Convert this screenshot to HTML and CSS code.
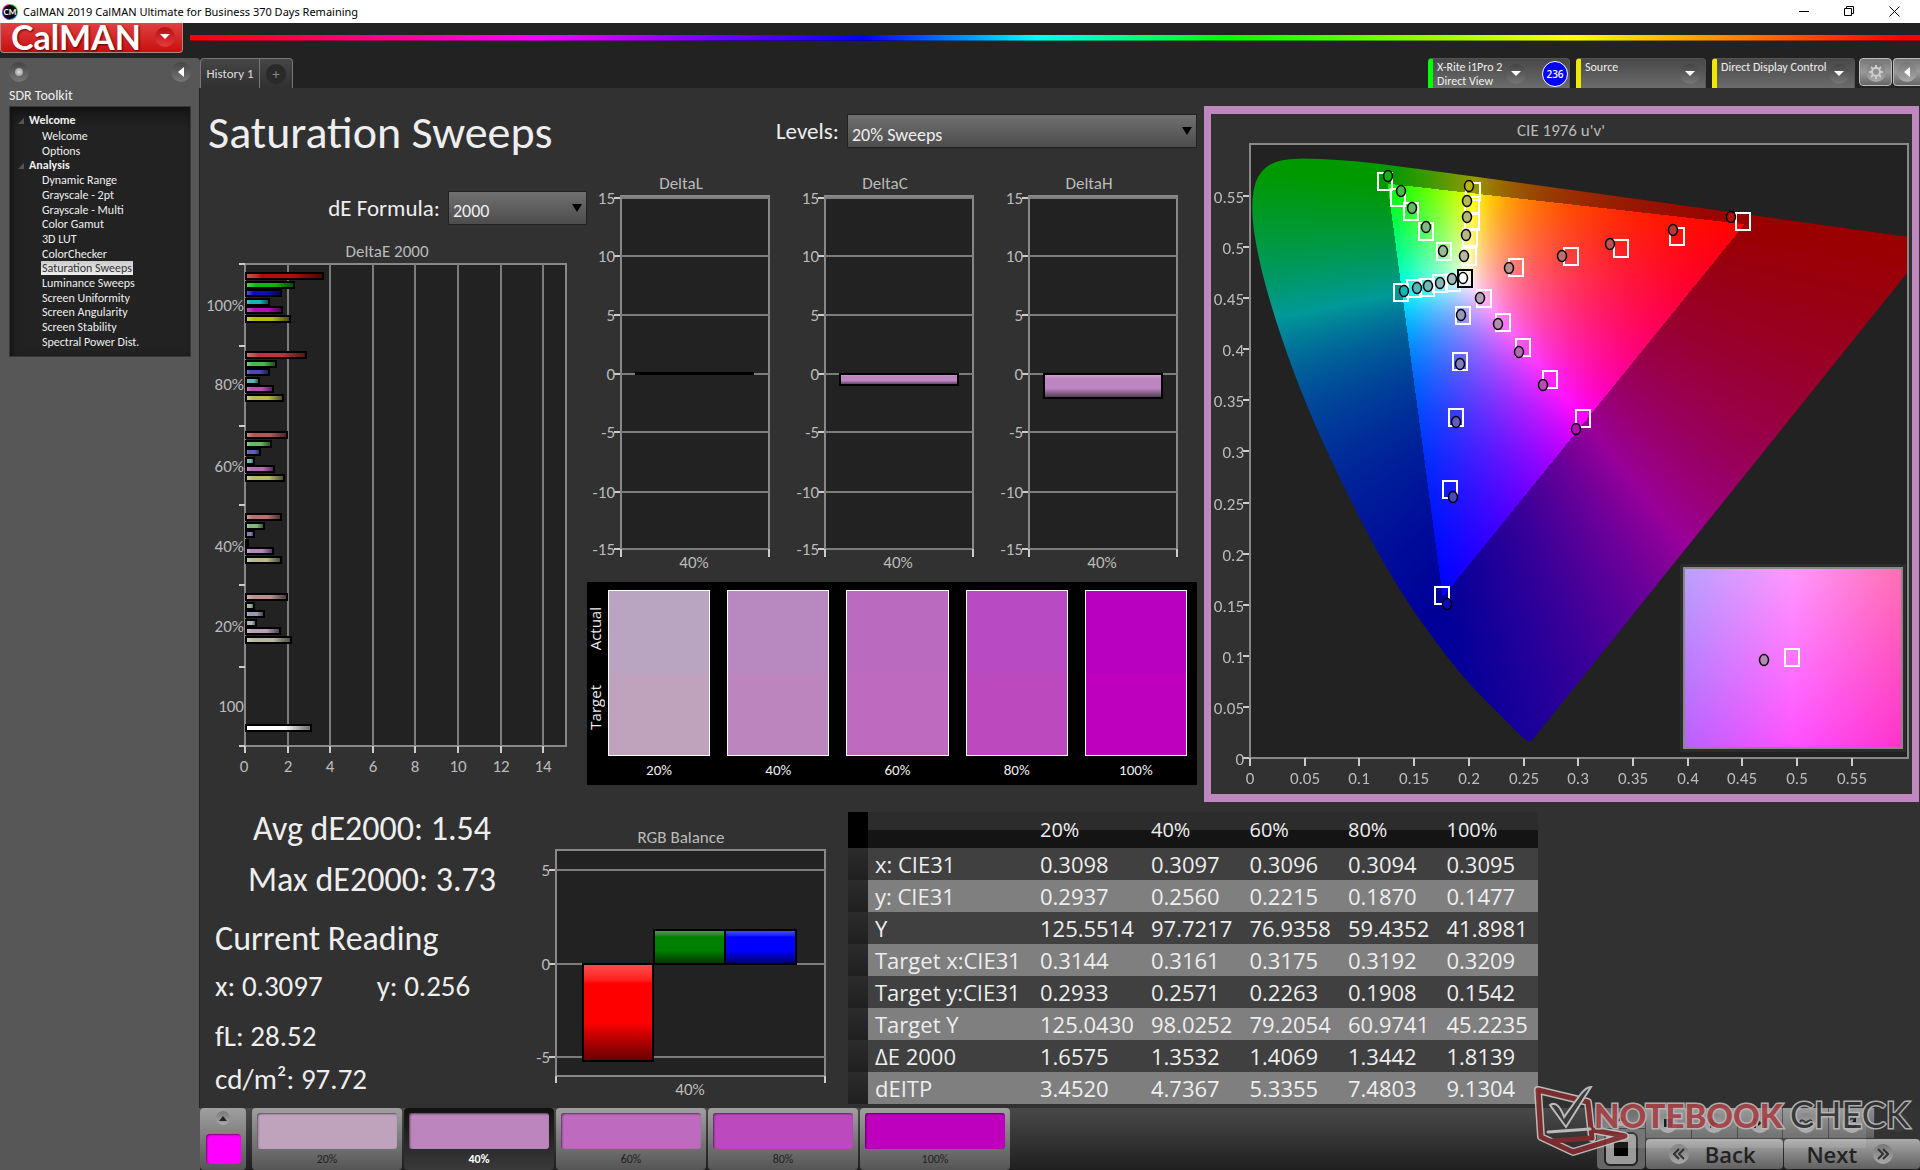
FILE: index.html
```html
<!DOCTYPE html>
<html lang="en">
<head>
<meta charset="utf-8">
<title>CalMAN 2019 CalMAN Ultimate for Business 370 Days Remaining</title>
<link rel="stylesheet" href="styles.css">
</head>
<body>
<header class="titlebar">
  <svg class="app-icon" width="16" height="16" viewBox="0 0 16 16" aria-hidden="true">
    <path d="M8 0a8 8 0 0 1 8 8H8z" fill="#4fd02b"/><path d="M16 8a8 8 0 0 1-8 8V8z" fill="#35c8e8"/>
    <path d="M8 16a8 8 0 0 1-8-8h8z" fill="#3838e0"/><path d="M0 8a8 8 0 0 1 8-8v8z" fill="#d828a0"/>
    <circle cx="8" cy="8" r="7" fill="#0c0c10"/>
    <text x="8" y="11" text-anchor="middle" class="app-icon-text">CM</text>
  </svg>
  <span class="window-title">CalMAN 2019 CalMAN Ultimate for Business 370 Days Remaining</span>
  <div class="window-buttons">
    <button aria-label="Minimize"><svg width="11" height="11" viewBox="0 0 11 11"><path d="M0 5.500h10" /></svg></button>
    <button aria-label="Restore"><svg width="11" height="11" viewBox="0 0 11 11"><path d="M.5 2.500h7v7h-7zM2.500 2.500v-2h7v7h-2"/></svg></button>
    <button aria-label="Close"><svg width="11" height="11" viewBox="0 0 11 11"><path d="M.5.500l10 10M10.500.500l-10 10"/></svg></button>
  </div>
</header>

<div class="brandbar">
  <button class="brand">CalMAN<span class="round red"><i class="caret"></i></span></button>
  <div class="rainbow"></div>
</div>

<div class="app">
  <nav class="sidebar">
    <div class="sidebar-top">
      <button class="round" aria-label="Options"><i class="dot"></i></button>
      <button class="round" aria-label="Collapse"><i class="caret left"></i></button>
    </div>
    <h2>SDR Toolkit</h2>
    <div class="tree">
      <strong>Welcome</strong>
      <ul class="two"><li><a href="#">Welcome</a></li><li><a href="#">Options</a></li></ul>
      <strong>Analysis</strong>
      <ul class="twelve">
        <li><a href="#">Dynamic Range</a></li><li><a href="#">Grayscale - 2pt</a></li>
        <li><a href="#">Grayscale - Multi</a></li><li><a href="#">Color Gamut</a></li>
        <li><a href="#">3D LUT</a></li><li><a href="#">ColorChecker</a></li>
        <li><a href="#" class="current">Saturation Sweeps</a></li><li><a href="#">Luminance Sweeps</a></li>
        <li><a href="#">Screen Uniformity</a></li><li><a href="#">Screen Angularity</a></li>
        <li><a href="#">Screen Stability</a></li><li><a href="#">Spectral Power Dist.</a></li>
      </ul>
    </div>
  </nav>

  <div class="workspace">
    <div class="toolbar">
      <div class="tabs"><button>History 1</button><button class="add" aria-label="Add tab"><span class="round">+</span></button></div>
      <div class="devices">
        <div class="device meter"><button>X-Rite i1Pro 2<br>Direct View</button><span class="round"><i class="caret"></i></span><span class="badge">236</span></div>
        <div class="device source"><button>Source</button><span class="round"><i class="caret"></i></span></div>
        <div class="device display"><button>Direct Display Control</button><span class="round"><i class="caret"></i></span></div>
        <button class="square" aria-label="Settings"><span class="round light"><svg width="14" height="14" viewBox="0 0 14 14"><circle cx="7" cy="7" r="4" fill="none" stroke="#ccc" stroke-width="2"/><path d="M7 0v3M7 11v3M0 7h3M11 7h3M2 2l2 2M10 10l2 2M12 2l-2 2M4 10l-2 2" stroke="#ccc" stroke-width="2"/></svg></span></button>
        <button class="square last" aria-label="Collapse devices"><span class="round light"><i class="caret left"></i></span></button>
      </div>
    </div>

    <main>
      <div class="top">
        <section class="overview">
          <h1>Saturation Sweeps</h1>
          <div class="field formula"><label for="formula">dE Formula:</label><span class="select"><select id="formula"><option>2000</option></select></span></div>
          <svg id="deltaE" class="chart" viewBox="0 0 387 550"></svg>
        </section>
        <section class="detail">
          <div class="field levels"><label for="levels">Levels:</label><span class="select"><select id="levels"><option>20% Sweeps</option></select></span></div>
          <div class="deltas">
            <svg id="deltaL" class="chart" viewBox="0 0 204 408"></svg>
            <svg id="deltaC" class="chart" viewBox="0 0 204 408"></svg>
            <svg id="deltaH" class="chart" viewBox="0 0 204 408"></svg>
          </div>
          <div class="compare">
            <div class="sides"><span>Actual</span><span>Target</span></div>
            <figure><div class="patch s20"></div><figcaption>20%</figcaption></figure>
            <figure><div class="patch s40"></div><figcaption>40%</figcaption></figure>
            <figure><div class="patch s60"></div><figcaption>60%</figcaption></figure>
            <figure><div class="patch s80"></div><figcaption>80%</figcaption></figure>
            <figure><div class="patch s100"></div><figcaption>100%</figcaption></figure>
          </div>
        </section>
        <section class="cie"><svg id="cie" class="chart" viewBox="0 0 701 680"></svg></section>
      </div>

      <div class="bottom">
        <section class="readings">
          <p class="big">Avg dE2000: 1.54</p>
          <p class="big max">Max dE2000: 3.73</p>
          <h3>Current Reading</h3>
          <p class="pair"><span>x: 0.3097</span><span>y: 0.256</span></p>
          <p class="lum">fL: 28.52</p>
          <p class="nits">cd/m²: 97.72</p>
        </section>
        <svg id="rgb" class="chart rgb" viewBox="0 0 308 301"></svg>
        <table>
          <colgroup><col class="c-stub"><col class="c-name"><col class="c-wide"><col><col><col><col></colgroup>
          <thead><tr><th></th><th></th><th>20%</th><th>40%</th><th>60%</th><th>80%</th><th>100%</th></tr></thead>
          <tbody>
            <tr><td></td><th>x: CIE31</th><td>0.3098</td><td>0.3097</td><td>0.3096</td><td>0.3094</td><td>0.3095</td></tr>
            <tr><td></td><th>y: CIE31</th><td>0.2937</td><td>0.2560</td><td>0.2215</td><td>0.1870</td><td>0.1477</td></tr>
            <tr><td></td><th>Y</th><td>125.5514</td><td>97.7217</td><td>76.9358</td><td>59.4352</td><td>41.8981</td></tr>
            <tr><td></td><th>Target x:CIE31</th><td>0.3144</td><td>0.3161</td><td>0.3175</td><td>0.3192</td><td>0.3209</td></tr>
            <tr><td></td><th>Target y:CIE31</th><td>0.2933</td><td>0.2571</td><td>0.2263</td><td>0.1908</td><td>0.1542</td></tr>
            <tr><td></td><th>Target Y</th><td>125.0430</td><td>98.0252</td><td>79.2054</td><td>60.9741</td><td>45.2235</td></tr>
            <tr><td></td><th>ΔE 2000</th><td>1.6575</td><td>1.3532</td><td>1.4069</td><td>1.3442</td><td>1.8139</td></tr>
            <tr><td></td><th>dEITP</th><td>3.4520</td><td>4.7367</td><td>5.3355</td><td>7.4803</td><td>9.1304</td></tr>
          </tbody>
        </table>
      </div>
    </main>

    <footer>
      <button class="pattern" aria-label="Pattern"><span class="round small"><i class="caret up"></i></span><span class="fill"></span></button>
      <div class="steps">
        <button><span class="step s20"></span>20%</button>
        <button class="active"><span class="step s40"></span>40%</button>
        <button><span class="step s60"></span>60%</button>
        <button><span class="step s80"></span>80%</button>
        <button><span class="step s100"></span>100%</button>
      </div>
      <div class="transport">
        <div class="stop"><button aria-label="More"><span class="round small"><i class="caret up"></i></span></button><button class="halt" aria-label="Stop"><i></i></button></div>
        <div class="controls">
          <div class="media">
            <button aria-label="Stop reading"><span class="round light"><svg width="10" height="10" viewBox="0 0 10 10"><path d="M1 1h8v8H1z"/></svg></span></button>
            <button aria-label="Read"><span class="round light"><svg width="10" height="10" viewBox="0 0 10 10"><path d="M1 0l8 5-8 5z"/></svg></span></button>
            <button aria-label="Read series"><span class="round light"><svg width="12" height="10" viewBox="0 0 12 10"><path d="M0 0h2v10H0zM10 0h2v10h-2zM4 2l4 3-4 3z"/></svg></span></button>
            <button aria-label="Read continuously"><span class="round light"><svg width="14" height="8" viewBox="0 0 14 8"><path d="M7 4C5 1 1 0 1 4s4 3 6 0 6-4 6 0-4 3-6 0z" fill="none" stroke="#222" stroke-width="2"/></svg></span></button>
            <button aria-label="Refresh"><span class="round light"><svg width="12" height="12" viewBox="0 0 12 12"><path d="M2 5a4 4 0 0 1 7-2M10 7a4 4 0 0 1-7 2" fill="none" stroke="#222" stroke-width="2"/><path d="M10 0v5H6zM2 12V7h4z"/></svg></span></button>
            <button class="off" aria-label="Unavailable" disabled><span class="round"></span></button>
          </div>
          <div class="paging">
            <button><span class="round light"><svg width="12" height="12" viewBox="0 0 12 12"><path d="M6 1L1 6l5 5M11 1L6 6l5 5" fill="none" stroke="#333" stroke-width="2"/></svg></span>Back</button>
            <button>Next<span class="round light"><svg width="12" height="12" viewBox="0 0 12 12"><path d="M1 1l5 5-5 5M6 1l5 5-5 5" fill="none" stroke="#333" stroke-width="2"/></svg></span></button>
          </div>
        </div>
      </div>
      <svg class="watermark" width="386" height="76" viewBox="0 0 386 76">
        <path d="M63 23h270v40H63z" fill="#fff" opacity=".12"/>
        <g fill="none" stroke-linejoin="round" stroke-linecap="round">
          <g stroke="#c8c8c8" stroke-width="8"><path d="M5 5l50 12 4 36M5 5l3 47 32 15 52-16-32-6"/></g>
          <path d="M5 5l50 12 4 36-40 3M5 5l3 47 32 15 52-16-32-6" stroke="#842c2f" stroke-width="5"/>
          <path d="M15 47l42-3" stroke="#c8c8c8" stroke-width="3"/>
        </g>
        <path d="M17 20q8-5 14 12l16-22q6-8 11-8L33 42z" fill="#3a3a3a" stroke="#c8c8c8" stroke-width="2"/>
        <text x="61" y="43" class="wm-bold">NOTEBOOK</text>
        <text x="257" y="43" class="wm-thin">CHECK</text>
      </svg>
    </footer>
  </div>
</div>
<script src="charts.js"></script>
</body>
</html>
```
FILE: styles.css
```css
* { box-sizing: border-box; }
body { margin: 0; min-height: 100vh; display: flex; flex-direction: column; background: #222; color: #eee; font-family: Carlito, Calibri, Lato, sans-serif; font-size: 13px; }
h1, h2, h3, p, ul, figure { margin: 0; padding: 0; font-weight: 400; }
ul { list-style: none; }
button, select { font: inherit; color: inherit; border: 0; margin: 0; padding: 0; background: none; }
a { color: inherit; text-decoration: none; }
svg { display: block; }

/* window frame */
.titlebar { height: 23px; background: #fff; color: #000; display: flex; align-items: center; padding-left: 2px; gap: 5px; font: 11px "Noto Sans", sans-serif; }
.app-icon-text { font: bold 8px Lato, sans-serif; fill: #fff; }
.window-title { flex: 1; }
.window-buttons { display: flex; padding-right: 3px; }
.window-buttons button { width: 45px; height: 22px; display: grid; place-items: center; }
.window-buttons path { fill: none; stroke: #000; }
.brandbar { height: 35px; display: flex; background: #222; gap: 7px; }
.brand { width: 183px; height: 30px; display: flex; align-items: center; justify-content: space-between; padding: 0 7px 2px 10px; background: linear-gradient(#e04141, #c80f10); border: 1px solid #a88; border-top: 0; border-radius: 0 0 4px 4px; font: bold 34px/28px Lato, sans-serif; color: #fff; text-shadow: 1px 1px 2px #500; }
.rainbow { flex: 1; height: 6px; margin-top: 12px; border-bottom: 1px solid #0006; background: linear-gradient(90deg, #f00, #f0f 20%, #00f 39%, #0ff 49%, #0f0 60%, #ff0 80%, #f00 99%); }

/* shared glyphs */
.round { width: 20px; height: 20px; border-radius: 50%; display: inline-grid; place-items: center; flex: none; background: linear-gradient(#444, #777); }
.round.red { background: linear-gradient(#b01215, #e8383a); }
.round.light { background: linear-gradient(#777, #aaa); }
.round.small { width: 14px; height: 14px; background: linear-gradient(#777, #aaa); }
.caret { border: 5px solid transparent; border-top-color: #fff; border-bottom: 0; }
.caret.left { border: 5px solid transparent; border-right: 6px solid #fff; border-left: 0; }
.caret.up { border: 4px solid transparent; border-bottom: 5px solid #222; border-top: 0; }
.dot { width: 8px; height: 8px; border-radius: 50%; background: radial-gradient(#ddd, #888); }

.app { flex: 1; display: flex; }

/* sidebar */
.sidebar { width: 200px; flex: none; background: #575757; border-radius: 0 4px 0 0; padding: 4px 9px; }
.sidebar-top { display: flex; justify-content: space-between; }
.sidebar h2 { font-size: 14px; line-height: 20px; margin: 4px 0 0; }
.tree { height: 251px; padding: 6px 0 0 19px; background: linear-gradient(#171717, #222 20px); border: 1px solid #383838; font-size: 12px; box-shadow: inset 2px 2px 6px #111; }
.tree strong { display: block; line-height: 15px; position: relative; }
.tree strong::before { content: ""; position: absolute; left: -11px; top: 5px; border: 3px solid; border-color: transparent #555 #555 transparent; }
.tree ul { display: grid; grid-auto-rows: 1fr; padding-left: 12px; align-items: center; }
.tree .two { height: 30px; }
.tree .twelve { height: 176px; }
.tree li { line-height: 14px; }
.tree a { padding: 0 1px; }
.tree .current { display: inline-block; background: linear-gradient(#ccc, #eee); color: #333; }

/* toolbar */
.workspace { flex: 1; min-width: 0; display: flex; flex-direction: column; }
.toolbar { height: 30px; display: flex; justify-content: space-between; }
.tabs { display: flex; border: 1px solid #777; border-bottom: 0; border-radius: 4px 4px 0 0; background: linear-gradient(#464646, #303030); color: #ddd; }
.tabs button { width: 58px; }
.tabs .add { width: 33px; border-left: 1px solid #777; }
.tabs .round { background: #2a2a2a; color: #888; font-size: 15px; }
.devices { display: flex; }
.device { display: flex; align-items: center; border-radius: 4px 4px 0 0; background: linear-gradient(#484848, #6c6c6c); border: 1px solid #555; border-left: 5px solid #0f0; border-bottom: 0; margin-right: 6px; padding: 0 5px 0 4px; font-size: 12px; line-height: 14px; }
.device button { flex: 1; align-self: stretch; text-align: left; }
.device.meter { width: 142px; padding-right: 1px; }
.device.source { width: 130px; border-left-color: #f0e800; }
.device.display { width: 143px; margin-right: 4px; border-left-color: #f0e800; white-space: nowrap; }
.source button, .display button { padding-bottom: 14px; }
.badge { width: 26px; height: 26px; border-radius: 50%; margin-left: 16px; background: #00f; border: 1px solid #fff; color: #fff; display: grid; place-items: center; font: 600 10px "Open Sans", sans-serif; }
.square { width: 33px; height: 28px; border: 1px solid #bbb; border-radius: 4px; background: linear-gradient(#777, #999 50%, #666); display: grid; place-items: center; margin-right: 1px; }
.square.last { width: 27px; margin: 0; border-right: 0; border-radius: 4px 0 0 4px; }

/* page */
main { flex: 1; background: #313131; border-left: 1px solid #222; margin-left: -1px; padding-right: 1px; }
.top { display: grid; grid-template-columns: 387fr 617fr 715fr; }
h1 { font-size: 46px; line-height: 60px; padding: 14px 0 2px 8px; }
.field { display: flex; align-items: center; gap: 8px; }
.field label { font-size: 23px; }
.select { position: relative; display: block; }
.select::after { content: ""; position: absolute; right: 5px; top: 13px; border: 5px solid transparent; border-top: 8px solid #000; border-bottom: 0; pointer-events: none; }
select { appearance: none; width: 100%; height: 34px; padding: 6px 4px 0; font-size: 18px; background: linear-gradient(#707070, #4c4c4c); border: 1px solid #222; border-radius: 0; }
.formula { margin-top: 27px; justify-content: flex-end; }
.formula .select { width: 139px; }
.levels select { padding-top: 8px; }
.chart { width: 100%; height: auto; overflow: visible; }
#deltaE { margin-top: 15px; }
.levels { margin: 26px 7px 24px 0; justify-content: flex-end; }
.levels .select { width: 350px; }
.deltas { display: grid; grid-template-columns: repeat(3, 1fr); padding-right: 5px; }
.compare { height: 203px; margin: 2px 7px 0 0; padding: 8px 10px 0 0; background: #000; display: grid; grid-template-columns: 21px 102fr 119fr 119fr 119fr 119fr; }
.compare figure { margin-left: 17px; text-align: center; }
.compare .sides + figure { margin-left: 0; }
.patch { height: 166px; border: 1px solid #fff; }
figcaption { line-height: 28px; font-size: 15px; }
.sides { height: 166px; display: grid; grid-template-rows: 1fr 1fr; place-items: center; font: 15px/16px "Open Sans", sans-serif; padding: 0 5px 10px 0; }
.sides span { writing-mode: vertical-rl; transform: rotate(180deg); }
.patch.s20 { background: linear-gradient(#b9a5c1 50%, #bfa3bd 50%); }
.patch.s40 { background: linear-gradient(#b888c0 50%, #bd85be 50%); }
.patch.s60 { background: linear-gradient(#ba6bc0 50%, #be6abe 50%); }
.patch.s80 { background: linear-gradient(#b84bc4 50%, #bc49bd 50%); }
.patch.s100 { background: linear-gradient(#b700c0 50%, #be00be 50%); }
.cie { margin-top: 18px; border: 8px solid #bf86bf; border-width: 8px 7px; align-self: start; }

.bottom { display: grid; grid-template-columns: 340fr 308fr 690fr 381fr; margin-top: 4px; }
.readings { padding-left: 15px; font-size: 29px; line-height: 36px; white-space: nowrap; }
.readings .big { font-size: 34px; line-height: 45px; text-align: center; padding-right: 11px; }
.readings .max { margin-top: 6px; }
.readings h3 { font-size: 34px; line-height: 40px; margin-top: 17px; }
.pair { display: flex; gap: 54px; margin-top: 9px; }
.lum { margin-top: 14px; }
.nits { margin-top: 7px; }
table { border-collapse: collapse; table-layout: fixed; width: 100%; margin-top: 6px; align-self: start; font: 22px/32px "Open Sans", sans-serif; white-space: nowrap; }
.c-stub { width: 20px; }
.c-name { width: 165px; }
.c-wide { width: 111px; }
th, td { padding: 0 0 0 7px; font-weight: 400; text-align: left; height: 32px; }
thead th { height: 36px; font-size: 20px; background: linear-gradient(#2c2c2c 50%, #141414 50%); }
thead th:first-child { background: #000; }
tbody tr { background: #404040; }
tbody tr:nth-child(even) { background: #7f7f7f; }
tbody td:first-child { background: linear-gradient(#2c2c2c, #202020); }

/* footer */
footer { position: relative; height: 62px; display: flex; background: linear-gradient(#494949, #1f1f1f); font-size: 12px; }
footer button { background: linear-gradient(#a0a0a0, #555); color: #222; }
.pattern { width: 46px; border-radius: 4px; display: flex; flex-direction: column; align-items: center; gap: 9px; padding-top: 3px; }
.fill { width: 35px; height: 30px; border-radius: 4px; background: #f0f; box-shadow: inset 1px 1px 2px #0008; }
.steps { display: flex; gap: 2px; margin-left: 6px; }
.steps button { width: 150px; border-radius: 4px; padding: 5px 5px 0; display: flex; flex-direction: column; line-height: 20px; align-items: center; }
.steps .active { background: linear-gradient(#111, #3a3a3a); color: #fff; font-weight: 700; }
.step { width: 140px; height: 36px; border-radius: 3px; box-shadow: inset 1px 1px 2px #0008; flex: none; }
.step.s20 { background: #bfa3bd; }
.step.s40 { background: #bd85be; }
.step.s60 { background: #be6abe; }
.step.s80 { background: #bc49bd; }
.step.s100 { background: #be00be; }
.transport { margin-left: auto; display: flex; gap: 1px; padding-bottom: 1px; }
.stop { width: 48px; display: grid; grid-template-rows: 20px 1fr; }
.stop button { background: linear-gradient(#5a5a5a, #777); }
.stop .halt { background: #666; display: grid; place-items: center; border-radius: 0 0 4px 4px; border-top: 1px solid #333; }
.halt i { width: 30px; height: 30px; border: 8px solid #999; outline: 2px solid #222; border-radius: 4px; background: #000; }
.controls { width: 274px; display: grid; grid-template-rows: 30px 1fr; gap: 1px; }
.media { display: grid; grid-template-columns: repeat(6, 1fr); gap: 1px; }
.media button { background: linear-gradient(#909090, #606060); }
.media .off { background: #333; }
.media .off .round { background: #3c3c3c; }
.paging { display: grid; grid-template-columns: 1fr 1fr; gap: 1px; }
.paging button { display: flex; align-items: center; justify-content: center; gap: 16px; padding-right: 4px; border-radius: 4px; font: 600 22px/28px "Open Sans", sans-serif; background: linear-gradient(#aaa, #606060); }
.watermark { position: absolute; right: 1px; top: -23px; opacity: .9; pointer-events: none; }
.wm-bold, .wm-thin { font: 900 33px Lato, sans-serif; fill: #a84347; stroke: #bbb; stroke-width: 3px; paint-order: stroke; }
.wm-thin { font-weight: 400; font-size: 36px; fill: #333; }

/* charts */
.chart text { font-size: 17px; fill: #bbb; }
.chart .frame { fill: #222; stroke: #888; stroke-width: 2; shape-rendering: crispEdges; }
.chart .edge { fill: none; stroke: #888; stroke-width: 2; shape-rendering: crispEdges; }
.chart .grid { stroke: #7c7c7c; stroke-width: 2; shape-rendering: crispEdges; }
.chart .tick { stroke: #ccc; stroke-width: 2; shape-rendering: crispEdges; }
```
FILE: charts.js
```js
const NS = "http://www.w3.org/2000/svg";

function add(parent, tag, attrs, text) {
  const el = document.createElementNS(NS, tag);
  for (const k in attrs) el.setAttribute(k, attrs[k]);
  if (text !== undefined) el.textContent = text;
  parent.append(el);
  return el;
}
const line = (p, x1, y1, x2, y2, c) => add(p, "line", { x1, y1, x2, y2, class: c });
const label = (p, x, y, t, anchor = "middle") => add(p, "text", { x, y: y + 5, "text-anchor": anchor }, t);

let gradients = 0;
function shade(svg, color, vertical) {
  const id = "g" + gradients++;
  const g = add(svg, "linearGradient", vertical ? { id, x1: 0, y1: 0, x2: 0, y2: 1 } : { id });
  const stop = (offset, c) => add(g, "stop", { offset, "stop-color": c });
  stop(0, `color-mix(in srgb, ${color} 70%, white)`);
  stop(.2, color);
  stop(.6, color);
  stop(1, `color-mix(in srgb, ${color} 40%, black)`);
  return `url(#${id})`;
}
function bar(svg, x, y, width, height, color, vertical) {
  add(svg, "rect", { x, y, width, height, fill: shade(svg, color, vertical), stroke: "#000", "stroke-width": 2 });
}

/* DeltaE 2000: horizontal bars, grouped by saturation level */
const COLORS = {
  100: ["#b80c0c", "#0cb80c", "#0c0cb8", "#0cb8b8", "#b80cb8", "#b8b80c"],
  80: ["#b83838", "#48b848", "#4848b8", "#58b8b8", "#b84cb8", "#b8b84c"],
  60: ["#b85454", "#64b864", "#6060b8", "#70b8b8", "#b868b8", "#b8b86c"],
  40: ["#b87070", "#80b880", "#8080b8", "#88b8b8", "#b888b8", "#b8b888"],
  20: ["#b89090", "#98b898", "#9898b8", "#a0b8b8", "#b8a0b8", "#b8b8a0"]
};
(function () {
  const svg = document.getElementById("deltaE"), x0 = 45, top = 24, bottom = 506;
  label(svg, 187, 12, "DeltaE 2000");
  add(svg, "rect", { x: x0, y: top, width: 321, height: bottom - top, class: "frame" });
  [0, 2, 4, 6, 8, 10, 12, 14].forEach((v, i) => {
    const x = Math.round(x0 + v * 21.3);
    if (i) line(svg, x, top, x, bottom, "grid");
    line(svg, x, bottom, x, bottom + 7, "tick");
    label(svg, x - (v ? 0 : 1), 527, v);
  });
  [24, 106, 186, 265, 345, 427, 506].forEach(y => line(svg, x0 - 6, y, x0, y, "tick"));
  const groups = [
    [100, 36, 66, [79, 50, 37, 25, 38, 46]],
    [80, 115, 145, [62, 32, 25, 15, 29, 39]],
    [60, 195, 227, [43, 27, 16, 10, 30, 40]],
    [40, 277, 307, [37, 20, 10, 4, 29, 37]],
    [20, 357, 387, [43, 10, 20, 12, 36, 47]]
  ];
  for (const [level, y, ly, widths] of groups) {
    widths.forEach((w, i) => bar(svg, x0 + 1, Math.round(y + i * 8.5) - 3, w - 2, 6, COLORS[level][i]));
    label(svg, x0 - 1, ly, level + "%", "end");
  }
  bar(svg, x0 + 1, 485, 65, 6, "#ffffff");
  label(svg, x0 - 1, 467, "100", "end");
})();

/* DeltaL / DeltaC / DeltaH */
function delta(id, name, y, h) {
  const svg = document.getElementById(id);
  label(svg, 94, 12, name);
  add(svg, "rect", { x: 34, y: 24, width: 148, height: 353, class: "frame" });
  const rows = [26, 84, 143, 202, 260, 320, 377];
  rows.forEach((gy, i) => {
    line(svg, 34, gy, 182, gy, "grid");
    line(svg, 27, gy, 33, gy, "tick");
    label(svg, 28, gy + 1, 15 - i * 5, "end");
  });
  line(svg, 34, 377, 34, 385, "tick");
  line(svg, 182, 377, 182, 385, "tick");
  if (h) bar(svg, 49, y, 118, h, "#bd86c0", true);
  else add(svg, "rect", { x: 48, y, width: 119, height: 3 });
  label(svg, 107, 391, "40%");
}
delta("deltaL", "DeltaL", 200, 0);
delta("deltaC", "DeltaC", 202, 11);
delta("deltaH", "DeltaH", 202, 24);

/* RGB balance */
(function () {
  const svg = document.getElementById("rgb");
  label(svg, 141, 32, "RGB Balance");
  add(svg, "rect", { x: 16, y: 44, width: 269, height: 226, class: "frame" });
  [[64, 5], [158, 0], [251, -5]].forEach(([y, v]) => {
    line(svg, 16, y, 285, y, "grid");
    line(svg, 9, y, 15, y, "tick");
    label(svg, 10, y + 1, v, "end");
  });
  line(svg, 16, 270, 16, 277, "tick");
  line(svg, 285, 270, 285, 277, "tick");
  bar(svg, 43, 158, 70, 97, "#ff0000", true);
  bar(svg, 114, 124, 71, 34, "#008000", true);
  bar(svg, 185, 124, 71, 34, "#0000ff", true);
  label(svg, 150, 284, "40%");
})();

/* CIE 1976 u'v' diagram */
const PLOT = { x: 39, y: 30, w: 658, h: 614, su: 1096, sv: 1022 };
const LOCUS = [[.1741, .005], [.1733, .0048], [.1714, .0051], [.1689, .0069], [.1644, .0109], [.1566, .0177], [.144, .0297],
  [.1241, .0578], [.1096, .0868], [.0913, .1327], [.0687, .2007], [.0454, .295], [.0235, .4127], [.0082, .5384],
  [.0039, .6548], [.0139, .7502], [.0389, .812], [.0743, .8338], [.1142, .8262], [.1547, .8059], [.2296, .7543],
  [.3016, .6923], [.3731, .6245], [.4441, .5547], [.5125, .4866], [.5752, .4242], [.627, .3725], [.6658, .334],
  [.6915, .3083], [.719, .2809], [.7347, .2653]];

/* linear RGB, scaled so that the strongest channel is full; dimmed outside the gamut */
function colorAt(u, v) {
  const X = 9 * u / (4 * v), Z = (12 - 3 * u - 20 * v) / (4 * v);
  const rgb = [3.2406 * X - 1.5372 - .4986 * Z, -.9689 * X + 1.8758 + .0415 * Z, .0557 * X - .204 + 1.057 * Z];
  const max = Math.max(...rgb), inside = Math.min(...rgb) >= 0;
  return rgb.map(c => 255 * Math.max(0, c / max) * (inside ? 1 : .6));
}
function paint(canvas, colorOf) {
  const ctx = canvas.getContext("2d"), w = canvas.width, h = canvas.height, img = ctx.createImageData(w, h);
  for (let y = 0; y < h; y++) for (let x = 0; x < w; x++) {
    const [r, g, b] = colorOf(x, y), i = (y * w + x) * 4;
    img.data[i] = r; img.data[i + 1] = g; img.data[i + 2] = b; img.data[i + 3] = 255;
  }
  ctx.putImageData(img, 0, 0);
  return ctx;
}
function canvasIn(svg, x, y, width, height) {
  const fo = add(svg, "foreignObject", { x, y, width, height });
  const c = document.createElement("canvas");
  c.width = width; c.height = height; c.style.display = "block";
  fo.append(c);
  return c;
}
(function () {
  const svg = document.getElementById("cie");
  label(svg, 350, 17, "CIE 1976 u'v'");
  add(svg, "rect", { x: PLOT.x, y: PLOT.y, width: PLOT.w, height: PLOT.h, class: "frame" });
  const canvas = canvasIn(svg, PLOT.x, PLOT.y, PLOT.w, PLOT.h);
  const ctx = paint(canvas, (x, y) => colorAt(x / PLOT.su, Math.max(.001, (PLOT.h - y) / PLOT.sv)));
  ctx.globalCompositeOperation = "destination-in";
  const pts = LOCUS.map(([x, y]) => {
    const d = -2 * x + 12 * y + 3;
    return [4 * x / d * PLOT.su, PLOT.h - 9 * y / d * PLOT.sv];
  });
  ctx.beginPath();
  ctx.moveTo(...pts[0]);
  for (let i = 1; i < pts.length - 1; i++) {
    ctx.quadraticCurveTo(...pts[i], (pts[i][0] + pts[i + 1][0]) / 2, (pts[i][1] + pts[i + 1][1]) / 2);
  }
  ctx.lineTo(...pts[pts.length - 1]);
  ctx.fill();
  add(svg, "rect", { x: PLOT.x, y: PLOT.y, width: PLOT.w, height: PLOT.h, class: "edge" });

  for (let i = 0; i <= 11; i++) {
    const v = String(+(i * .05).toFixed(2));
    const x = Math.round(PLOT.x + i * 54.7), y = Math.round(PLOT.y + PLOT.h - i * 51.1);
    line(svg, x, 644, x, 652, "tick");
    label(svg, x, 665, v);
    line(svg, PLOT.x - 7, y, PLOT.x - 1, y, "tick");
    label(svg, PLOT.x - 6, y + 2, v, "end");
  }

  /* target squares and measured dots, per hue, from 100% down to 20% */
  const series = [
    [1, [[135, 37], [148, 53], [161, 67], [176, 87], [194, 107]], [[138, 32], [151, 47], [162, 64], [176, 83], [193, 107]]],
    [5, [[223, 47], [222, 61], [222, 77], [220, 93], [219, 112]], [[219, 42], [217, 57], [217, 73], [216, 91], [214, 112]]],
    [3, [[151, 148], [164, 144], [177, 143], [190, 139], [203, 138]], [[154, 147], [167, 144], [178, 142], [190, 139], [202, 135]]],
    [0, [[493, 77], [427, 92], [371, 104], [321, 112], [266, 123]], [[481, 73], [423, 86], [360, 100], [312, 112], [259, 124]]],
    [4, [[333, 274], [300, 235], [273, 203], [253, 178], [234, 154]], [[326, 285], [293, 241], [269, 208], [248, 180], [230, 154]]],
    [2, [[192, 451], [200, 345], [206, 273], [210, 217], [213, 171]], [[197, 460], [203, 353], [206, 278], [210, 220], [211, 171]]]
  ];
  const square = (x, y, stroke) => add(svg, "rect", { x: x - 7, y: y - 8, width: 14, height: 17, fill: "none", stroke, "stroke-width": 2 });
  const dot = (x, y, fill) => add(svg, "ellipse", { cx: x, cy: y, rx: 4.5, ry: 5.5, fill, stroke: "#000", "stroke-width": 1.5 });
  const levels = [100, 80, 60, 40, 20];
  for (const [, targets] of series) for (const [x, y] of targets) square(x + PLOT.x, y + PLOT.y, "#fff");
  square(215 + PLOT.x, 134 + PLOT.y, "#000");
  for (const [hue, , dots] of series) dots.forEach(([x, y], i) => dot(x + PLOT.x, y + PLOT.y, COLORS[levels[i]][hue]));
  dot(213 + PLOT.x, 134 + PLOT.y, "#fff");

  /* magnified view around the selected 40% target: left, middle and right colours of the top and bottom edges */
  const EDGES = [
    [[185, 160, 255], [255, 152, 255], [255, 112, 176]],
    [[184, 96, 255], [255, 80, 255], [255, 50, 204]]
  ];
  const mix = (a, b, t) => a.map((c, i) => c + (b[i] - c) * t);
  add(svg, "rect", { x: 469, y: 450, width: 226, height: 188, fill: "#2c2c2c" });
  const inset = canvasIn(svg, 473, 454, 218, 180);
  paint(inset, (x, y) => {
    const k = x < 109 ? 0 : 1, t = x / 109 - k;
    return mix(mix(EDGES[0][k], EDGES[0][k + 1], t), mix(EDGES[1][k], EDGES[1][k + 1], t), y / 180);
  });
  add(svg, "rect", { x: 473, y: 454, width: 218, height: 180, class: "edge" });
  square(581, 543, "#fff");
  dot(553, 546, "#b888b8");
})();
```
